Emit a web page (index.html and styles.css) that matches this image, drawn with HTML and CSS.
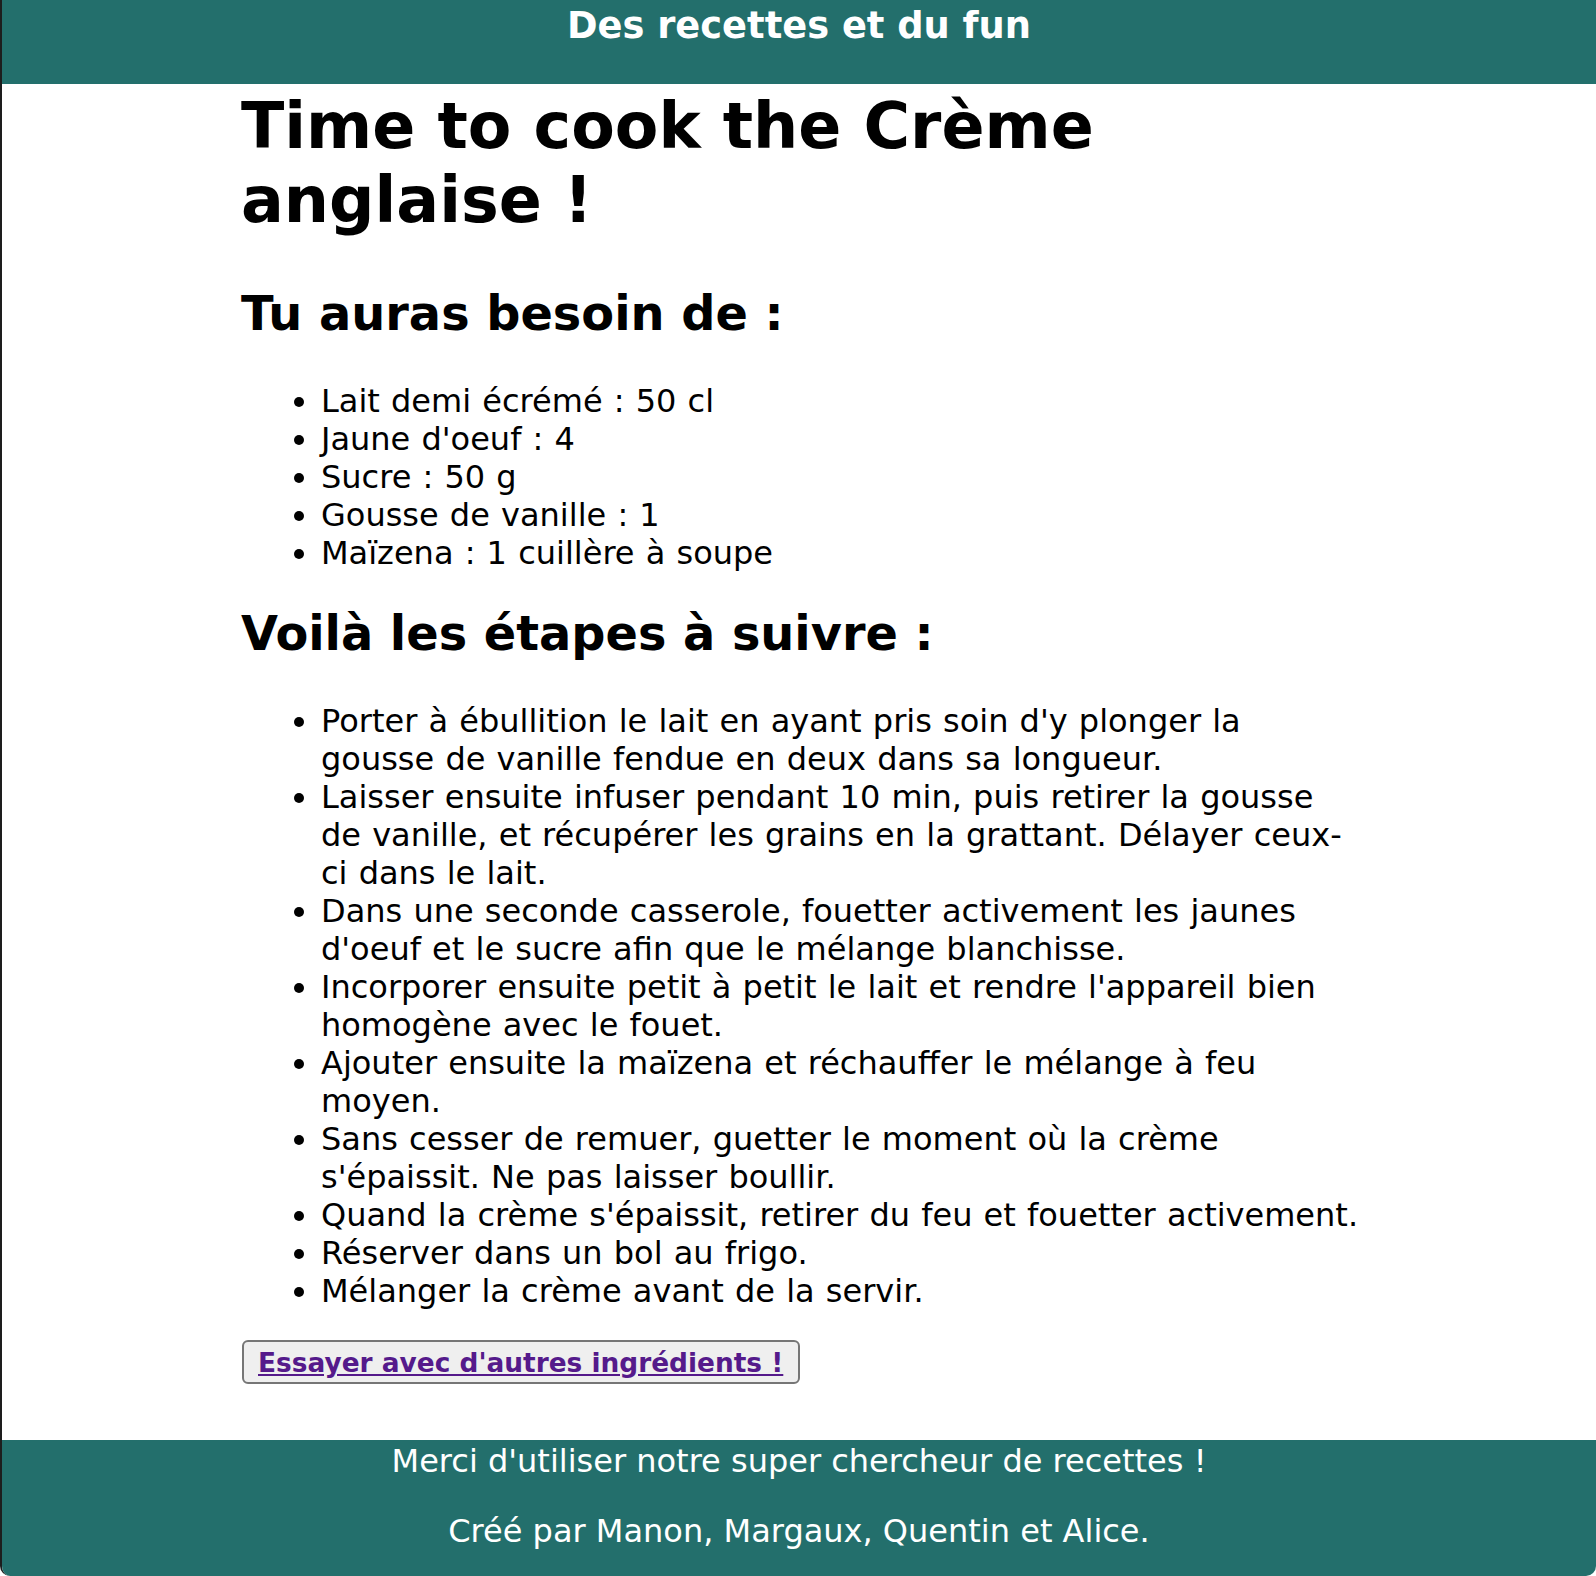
FILE: index.html
```html
<!DOCTYPE html>
<html lang="fr">
<head>
<meta charset="utf-8">
<title>Des recettes et du fun</title>
<link rel="stylesheet" href="styles.css">
</head>
<body>
<div class="page">
  <header class="site-header">
    <p class="site-title">Des recettes et du fun</p>
  </header>
  <main class="recipe">
    <h1 class="recipe-title">Time to cook the Crème anglaise !</h1>
    <h2 class="section-title">Tu auras besoin de :</h2>
    <ul class="list">
      <li>Lait demi écrémé : 50 cl</li>
      <li>Jaune d'oeuf : 4</li>
      <li>Sucre : 50 g</li>
      <li>Gousse de vanille : 1</li>
      <li>Maïzena : 1 cuillère à soupe</li>
    </ul>
    <h2 class="section-title">Voilà les étapes à suivre :</h2>
    <ul class="list">
      <li>Porter à ébullition le lait en ayant pris soin d'y plonger la gousse de vanille fendue en deux dans sa longueur.</li>
      <li>Laisser ensuite infuser pendant 10 min, puis retirer la gousse de vanille, et récupérer les grains en la grattant. Délayer ceux-ci dans le lait.</li>
      <li>Dans une seconde casserole, fouetter activement les jaunes d'oeuf et le sucre afin que le mélange blanchisse.</li>
      <li>Incorporer ensuite petit à petit le lait et rendre l'appareil bien homogène avec le fouet.</li>
      <li>Ajouter ensuite la maïzena et réchauffer le mélange à feu moyen.</li>
      <li>Sans cesser de remuer, guetter le moment où la crème s'épaissit. Ne pas laisser boullir.</li>
      <li>Quand la crème s'épaissit, retirer du feu et fouetter activement.</li>
      <li>Réserver dans un bol au frigo.</li>
      <li>Mélanger la crème avant de la servir.</li>
    </ul>
    <button class="retry" type="button"><a class="retry-link" href="#">Essayer avec d'autres ingrédients !</a></button>
  </main>
  <footer class="site-footer">
    <p class="footer-line">Merci d'utiliser notre super chercheur de recettes !</p>
    <p class="footer-line">Créé par Manon, Margaux, Quentin et Alice.</p>
  </footer>
</div>
</body>
</html>
```

FILE: styles.css
```css
html, body {
  margin: 0;
  padding: 0;
  background: #ffffff;
}

body {
  font-family: "DejaVu Sans", Verdana, sans-serif;
  font-size: 32px;
  color: #000;
}

.page {
  border-left: 2px solid #1d1d1d;
  border-bottom-left-radius: 10px;
  border-bottom-right-radius: 10px;
  overflow: hidden;
  min-height: 100vh;
  display: flex;
  flex-direction: column;
}

.site-header {
  background: #236f6c;
  height: 84px;
  box-sizing: border-box;
  padding-top: 4px;
  text-align: center;
}

.site-title {
  margin: 0;
  color: #fff;
  font-weight: bold;
  font-size: 36.8px;
}

.recipe {
  width: 1121.5px;
  margin-left: 239px;
  padding-bottom: 47px;
  flex: 1 0 auto;
}

.recipe-title {
  font-size: 63.5px;
  font-weight: bold;
  margin: 5px 0 49px;
}

.section-title {
  font-size: 47.8px;
  font-weight: bold;
  margin: 33px 0 41px;
}

.list + .section-title {
  margin-top: 34px;
}

.list {
  margin: 0 0 30px;
  padding-left: 80px;
  word-spacing: 1px;
}

.retry {
  display: block;
  margin: 0 0 0 1px;
  padding: 5px 15px 4px 14px;
  border: 2px solid #767676;
  border-radius: 6px;
  background: #efefef;
  font-family: "DejaVu Sans", Verdana, sans-serif;
  font-size: 26.4px;
  font-weight: bold;
  line-height: normal;
}

.retry-link {
  color: #551a8b;
  text-decoration: underline;
}

.site-footer {
  background: #236f6c;
  color: #fff;
  text-align: center;
  padding-top: 2px;
}

.footer-line {
  margin: 0 0 32px;
}

.footer-line:last-child {
  margin-bottom: 26px;
}
```
